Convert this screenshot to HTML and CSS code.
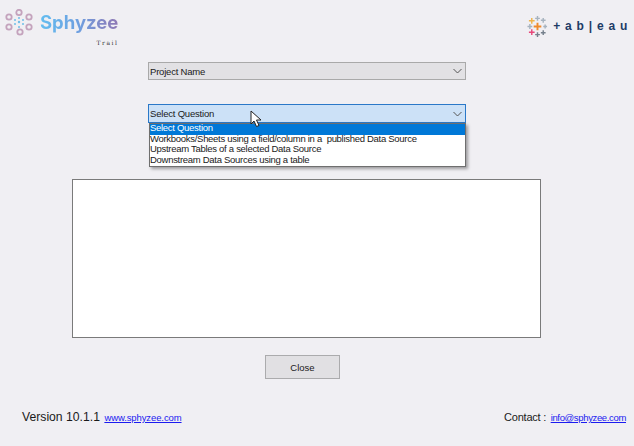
FILE: index.html
```html
<!DOCTYPE html>
<html lang="en">
<head>
<meta charset="utf-8">
<title>Sphyzee Trail</title>
<link rel="stylesheet" href="styles.css">
</head>
<body>
<div class="app">
  <header class="header">
    <div class="brand">
      <svg class="brand-mark" width="32" height="28" viewBox="0 0 32 28" fill="none" stroke="#c4a3bd" stroke-width="1.800">
        <circle cx="16" cy="3.500" r="2.700"/><circle cx="26" cy="8" r="2.700"/><circle cx="26" cy="18" r="2.700"/>
        <circle cx="17" cy="23" r="2.700"/><circle cx="6" cy="18" r="2.700"/><circle cx="6" cy="8" r="2.700"/>
        <g fill="#6fbfe8" stroke="none">
          <circle cx="16" cy="9" r="1"/><circle cx="20" cy="11" r="1"/><circle cx="20" cy="15" r="1"/>
          <circle cx="16" cy="18" r="1"/><circle cx="12" cy="15" r="1"/><circle cx="12" cy="11" r="1"/>
          <circle cx="16" cy="13" r="1.200"/>
        </g>
      </svg>
      <div class="brand-text">
        <div class="brand-name">Sphyzee</div>
        <div class="brand-trail">Trail</div>
      </div>
    </div>
    <div class="tableau">
      <svg width="21" height="21" viewBox="0 0 22 22" fill="none" stroke-width="1.500">
        <path d="M11 7v8M7 11h8" stroke="#ef8a2c" stroke-width="2"/>
        <path d="M5 2v6M2 5h6" stroke="#efb44a"/>
        <path d="M11 0v5M8.500 2.500h5" stroke="#a7b3bf"/>
        <path d="M17 2v5M14.500 4.500h5" stroke="#a7b3bf"/>
        <path d="M3 8.500v5M.5 11h5" stroke="#a7b3bf"/>
        <path d="M19 9v4M17 11h4" stroke="#a7b3bf"/>
        <path d="M5 14v6M2 17h6" stroke="#e8487a"/>
        <path d="M11 17v5M8.500 19.500h5" stroke="#76808c"/>
        <path d="M17 15v5M14.500 17.500h5" stroke="#76808c"/>
      </svg>
      <span class="tableau-word">+ a b | e a u</span>
    </div>
  </header>

  <main class="form">
    <div class="combo combo-plain">
      <span>Project Name</span>
      <svg class="chev" width="9" height="6" viewBox="0 0 9 6"><path d="M.5 1l4 4 4-4" fill="none" stroke="#555" stroke-width="1"/></svg>
    </div>

    <div class="combo-wrap">
      <div class="combo combo-open">
        <span>Select Question</span>
        <svg class="chev" width="9" height="6" viewBox="0 0 9 6"><path d="M.5 1l4 4 4-4" fill="none" stroke="#555" stroke-width="1"/></svg>
      </div>
      <ul class="list">
        <li class="selected">Select Question</li>
        <li>Workbooks/Sheets using a field/column in a&nbsp; published Data Source</li>
        <li>Upstream Tables of a selected Data Source</li>
        <li>Downstream Data Sources using a table</li>
      </ul>
      <svg class="cursor" width="13" height="18" viewBox="0 0 13 18"><path d="M1 1v13l3-3 2.500 5.500 2.500-1-2.500-5.500h4.500z" fill="#fff" stroke="#222" stroke-width="1"/></svg>
    </div>

    <div class="output"></div>
    <button class="close" type="button">Close</button>
  </main>

  <footer class="footer">
    <div class="foot-left"><span class="version">Version 10.1.1</span> <a href="#">www.sphyzee.com</a></div>
    <div class="foot-right"><span class="contact">Contact :</span> <a href="#">info@sphyzee.com</a></div>
  </footer>
</div>
</body>
</html>
```

FILE: styles.css
```css
* { box-sizing: border-box; }
html, body { margin: 0; height: 100%; }
body { background: #f0eff3; font-family: "Liberation Sans", Arial, sans-serif; color: #1a1a1a; overflow: hidden; }
.app { width: 634px; height: 446px; display: flex; flex-direction: column; }

.header { height: 62px; display: flex; justify-content: space-between; padding: 7px 6px 0 3px; }
.brand { display: flex; align-items: flex-start; gap: 5px; }
.brand-mark { margin-top: 2px; }
.brand-text { display: flex; flex-direction: column; padding-top: 2px; }
.brand-name { font: 700 18.500px/26px Inter, sans-serif; background: linear-gradient(90deg, #62bdf0, #6f9fe0 50%, #8f78b4); -webkit-background-clip: text; background-clip: text; color: transparent; }
.brand-trail { font: 6px/8px "DejaVu Serif", serif; letter-spacing: 1.500px; text-align: right; color: #333; padding-top: 4px; }
.tableau { display: flex; align-items: center; gap: 5px; height: 20px; margin-top: 9px; }
.tableau-word { font: bold 12px/14px "Liberation Sans", sans-serif; color: #1d3b66; letter-spacing: 0.750px; white-space: nowrap; }

.form { display: flex; flex-direction: column; align-items: flex-start; flex: 1; }
.combo { width: 318px; height: 18px; display: flex; align-items: center; justify-content: space-between; padding: 0 3px 0 1px; font-size: 9.500px; letter-spacing: -0.200px; border: 1px solid #a9a9a9; background: #e2e1e4; margin-left: 148px; }
.combo-wrap { position: relative; margin: 24px 0 0 148px; width: 318px; height: 19px; }
.combo-open { height: 19px; margin-left: 0; background: #cce1f7; border-color: #2a78c8; }
.chev { margin-right: 0; }
.list { position: absolute; left: 1px; top: 19px; width: 317px; margin: 0; padding: 0; list-style: none; background: #fff; border: 1px solid #6f6f6f; box-shadow: 2px 2px 3px rgba(0,0,0,.35); font-size: 9.500px; letter-spacing: -0.290px; }
.list li { height: 10.500px; line-height: 8px; white-space: nowrap; }
.list .selected { background: #0078d7; color: #fff; }
.cursor { position: absolute; left: 102px; top: 6px; }

.output { width: 469px; height: 159px; margin: 56px 0 0 72px; background: #fff; border: 1px solid #7a7a7a; }
.close { width: 75px; height: 24px; margin: 17px 0 0 265px; background: #e1e0e3; border: 1px solid #ababad; font: 9.500px "Liberation Sans", sans-serif; color: #1a1a1a; padding: 0; }

.footer { height: 67px; display: flex; justify-content: space-between; align-items: flex-start; padding: 28px 8px 0 22px; }
.version { font-size: 12.200px; }
.contact { font-size: 11px; letter-spacing: -0.200px; }
.footer a { font-size: 9.500px; color: #1b1bf0; letter-spacing: -0.100px; }
.foot-right a { letter-spacing: -0.350px; }
```
